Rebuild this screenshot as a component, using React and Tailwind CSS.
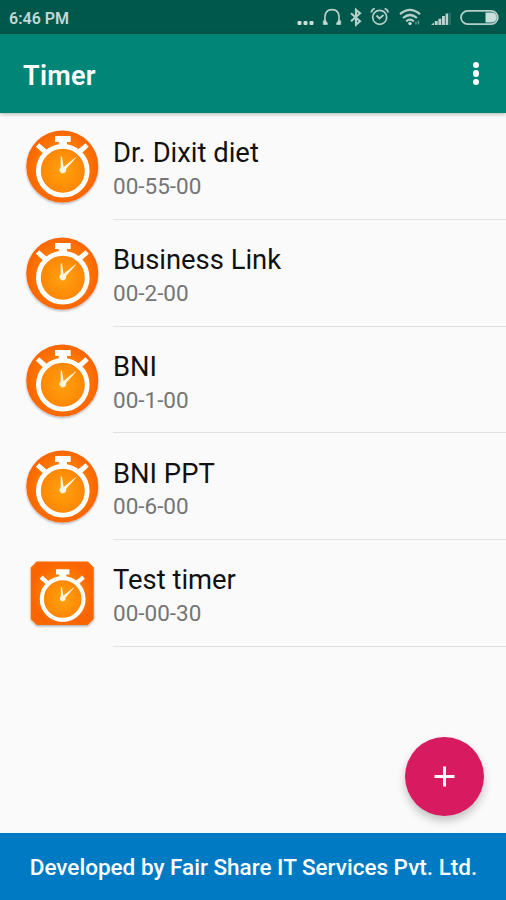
import React from "react";

const timers = [
  { name: "Dr. Dixit diet", time: "00-55-00", shape: "circle" },
  { name: "Business Link", time: "00-2-00", shape: "circle" },
  { name: "BNI", time: "00-1-00", shape: "circle" },
  { name: "BNI PPT", time: "00-6-00", shape: "circle" },
  { name: "Test timer", time: "00-00-30", shape: "square" },
];

const Stopwatch = () => (
  <g>
    <circle cx="38.8" cy="42.7" r="24.4" fill="url(#dial)" stroke="#fff" strokeWidth="4.8" />
    <path d="M31 8h15.700v6h-3.700v5h-8.200v-5H31z" fill="#fff" />
    <path d="M13.500 17l7.500 6.700M63.100 17l-7.500 6.700" stroke="#fff" strokeWidth="5" />
    <path d="M19 22l4 3.500M57.600 22l-4 3.500" stroke="#fff" strokeWidth="3.600" />
    <path
      d="M36.700 28.500h1.200l1.700 10.400 12-9.600 0.400 0.400-10 11.400a3.300 3.300 0 1 1-5.300-1.600z"
      fill="#fff6e0"
    />
  </g>
);

const TimerIcon = ({ shape }) => (
  <svg className="h-20 w-[76px]" viewBox="0 0 76 80">
    <defs>
      <radialGradient id="dial">
        <stop offset="0" stopColor="#ffa20e" />
        <stop offset="1" stopColor="#fd8404" />
      </radialGradient>
      <radialGradient id="plate">
        <stop offset="0.5" stopColor="#fe8204" />
        <stop offset="1" stopColor="#fb6504" />
      </radialGradient>
      <filter id="drop" x="-10%" y="-10%" width="120%" height="125%">
        <feDropShadow dx="0" dy="1.3" stdDeviation="0.9" floodColor="#000" floodOpacity="0.32" />
      </filter>
    </defs>
    {shape === "circle" ? (
      <>
        <circle cx="38.3" cy="38.4" r="36" fill="url(#plate)" filter="url(#drop)" />
        <Stopwatch />
      </>
    ) : (
      <>
        <path
          d="M13 7.300h50.500l5.500 5.500v51l-5.500 5.500H13l-5.500-5.500V12.800z"
          fill="url(#plate)"
          stroke="#fb6a04"
          strokeWidth="1.500"
          strokeLinejoin="round"
          filter="url(#drop)"
        />
        <g transform="translate(5.500 7.500) scale(0.855)">
          <Stopwatch />
        </g>
      </>
    )}
  </svg>
);

const StatusIcons = () => (
  <svg className="h-[34px] w-[210px]" viewBox="296 0 210 34" fill="none" stroke="#b5d0ca" strokeWidth="1.5">
    <g fill="#c9ddd9" stroke="none">
      <rect x="297.500" y="21" width="4" height="4" rx="1" />
      <rect x="303.500" y="21" width="4" height="4" rx="1" />
      <rect x="309.500" y="21" width="4" height="4" rx="1" />
    </g>
    {/* headset */}
    <path d="M325.500 22c-2-9 1.500-12.300 6.500-12.300s8.500 3.300 6.500 12.300" strokeWidth="1.700" />
    <path d="M323.300 20.800v3.700h4v-1.500l-2-2.200zM340.700 20.800v3.700h-4v-1.500l2-2.200z" fill="#c3d9d5" strokeWidth="0.800" />
    {/* bluetooth */}
    <path d="M351 13.200l9 8-4 3.500V9.700l4 3.500-9 8" strokeWidth="2.100" />
    {/* alarm */}
    <circle cx="379.700" cy="17.300" r="7" strokeWidth="1.700" />
    <path d="M371.300 12.500q0.300-3 3.500-4M388.100 12.500q-0.300-3-3.500-4M376.500 15.500l3 3 4-3.500" strokeWidth="1.800" />
    {/* wifi */}
    <g strokeWidth="2.200">
      <path d="M400 14.200q10-8.500 20 0" />
      <path d="M403 18q7-6 14 0" />
      <path d="M406.200 21.300q3.800-3.300 7.600 0" />
    </g>
    <circle cx="410" cy="23.500" r="1.700" fill="#c3d9d5" stroke="none" />
    <path d="M416 24.500v-3M418.500 20.500v4" strokeWidth="1.300" opacity="0.600" />
    {/* signal */}
    <g fill="#b9d3ce" stroke="none">
      <path d="M431 25l3-2.500V25z" />
      <rect x="434.800" y="21" width="2.900" height="4" />
      <rect x="438.400" y="18.700" width="2.900" height="6.300" />
      <rect x="442" y="16" width="2.900" height="9" />
      <rect x="445.600" y="13.500" width="2.600" height="11.500" />
      <rect x="449" y="12.500" width="2" height="12.500" opacity="0.200" />
    </g>
    {/* battery */}
    <rect x="461" y="10.800" width="36.800" height="13.400" rx="6.700" strokeWidth="1.800" />
    <path d="M485.500 12.500h6.300a5 5 0 0 1 0 10h-6.300z" fill="#c8dfdb" stroke="none" />
  </svg>
);

const App = () => {
  return (
    <div className="relative flex h-[900px] w-[506px] flex-col overflow-hidden bg-[#fafafa] font-['Roboto',sans-serif]">
      <div className="flex h-[34px] shrink-0 items-center justify-between bg-[#00574b] pl-[9px]">
        <span className="pt-[3px] text-[16px] font-semibold text-[#c3d9d5]">6:46 PM</span>
        <StatusIcons />
      </div>
      <header className="z-10 flex h-[79px] shrink-0 items-center justify-between bg-[#008577] pr-[27px] pl-[23px] shadow-[0_1px_4px_rgba(0,0,0,0.3)]">
        <h1 className="pt-[6px] text-[27px] font-semibold tracking-[0.3px] text-white">Timer</h1>
        <button className="flex flex-col gap-[2px]" aria-label="More options">
          <span className="size-[6.500px] rounded-full bg-white" />
          <span className="size-[6.500px] rounded-full bg-white" />
          <span className="size-[6.500px] rounded-full bg-white" />
        </button>
      </header>
      <ul className="flex-1">
        {timers.map((timer) => (
          <li key={timer.name} className="flex h-[106.800px] pl-6">
            <div className="w-[89px] pt-[15px]">
              <TimerIcon shape={timer.shape} />
            </div>
            <div className="flex-1 border-b border-[#e2e2e2] pt-[24.300px]">
              <p className="text-[27.400px] leading-[32px] text-[#111]">{timer.name}</p>
              <p className="pt-[2.800px] text-[22.500px] leading-[28px] text-[#757575]">{timer.time}</p>
            </div>
          </li>
        ))}
      </ul>
      <footer className="flex h-[67px] shrink-0 items-center justify-center bg-[#007bc3] pt-[2px] pl-px text-[22.500px] font-medium whitespace-nowrap text-white">
        Developed by Fair Share IT Services Pvt. Ltd.
      </footer>
      <button
        className="absolute right-[22px] bottom-[84px] flex size-[79px] items-center justify-center rounded-full bg-[#d81b60] shadow-[0_5px_9px_rgba(0,0,0,0.22)]"
        aria-label="Add timer"
      >
        <svg className="size-[21px]" viewBox="0 0 21 21" stroke="#fff" strokeWidth="3">
          <path d="M10.500 0.500v20M0.500 10.500h20" />
        </svg>
      </button>
    </div>
  );
};

export default App;
